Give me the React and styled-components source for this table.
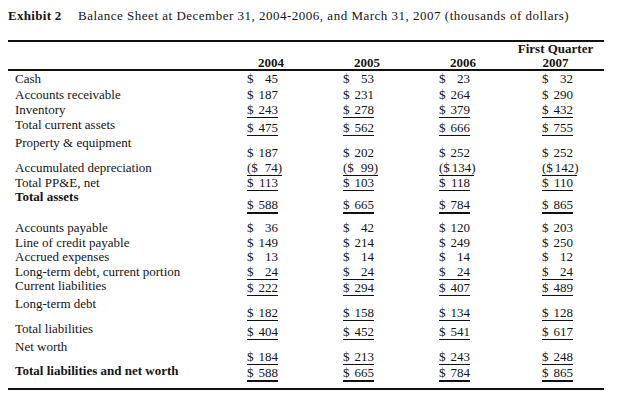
import styled, { createGlobalStyle } from 'styled-components';

const GlobalStyle = createGlobalStyle`
  html, body {
    margin: 0;
    padding: 0;
    background: #ffffff;
  }
  body {
    font-family: "Liberation Serif", "Times New Roman", serif;
    color: #141414;
  }
`

const Page = styled.div`
  width: 596px;
  padding: 8px 0 0 8px;
`

const Title = styled.div`
  display: flex;
  font-size: 13px;
  line-height: 15px;
  letter-spacing: 0.5px;
`

const ExhibitNo = styled.span`
  width: 70px;
  font-weight: 700;
  letter-spacing: 0.3px;
`

const Table = styled.div`
  margin-top: 17px;
  border-top: 2px solid #111;
  border-bottom: 2px solid #111;
  padding-bottom: 8px;
  font-size: 13px;
`

const Header = styled.div`
  display: grid;
  grid-template-columns: 211px 96px 96px 96px 97px;
  align-items: end;
  line-height: 13.5px;
  border-bottom: 2px solid #111;
  font-weight: 700;
`

const HeadCell = styled.div`
  text-align: center;
  padding-left: ${p => (p.$last ? 0 : 8)}px;
`

const Row = styled.div`
  display: grid;
  grid-template-columns: 211px 96px 96px 96px 97px;
  align-items: start;
  height: ${p => p.$h}px;
`

const Label = styled.div`
  padding-left: 7px;
  line-height: 15px;
  font-weight: ${p => (p.$bold ? 700 : 400)};
  white-space: nowrap;
`

const ValueCell = styled.div`
  padding-left: ${p => (p.$last ? 35 : 28)}px;
  margin-top: ${p => p.$shift}px;
`

const Amount = styled.div`
  display: inline-flex;
  width: ${p => (p.$neg ? 35 : 31)}px;
  line-height: 14px;
  border-bottom: ${p => p.$line || 0}px solid ${p => (p.$line ? '#111' : 'transparent')};
  height: 14px;
  white-space: nowrap;
`

const Spacer = styled.span`
  flex: 1;
  min-width: 2px;
`

const rows = [
  { label: 'Cash', v: ['45', '53', '23', '32'], h: 16 },
  { label: 'Accounts receivable', v: ['187', '231', '264', '290'], h: 15 },
  { label: 'Inventory', v: ['243', '278', '379', '432'], h: 15, line: 1 },
  { label: 'Total current assets', v: ['475', '562', '666', '755'], h: 18, shift: 3, line: 1 },
  { label: 'Property & equipment', v: ['187', '202', '252', '252'], h: 25, shift: 10 },
  { label: 'Accumulated depreciation', v: ['74', '99', '134', '142'], h: 15, line: 1, neg: true },
  { label: 'Total PP&E, net', v: ['113', '103', '118', '110'], h: 14, line: 1 },
  { label: 'Total assets', v: ['588', '665', '784', '865'], h: 31, shift: 8, line: 2, bold: true },
  { label: 'Accounts payable', v: ['36', '42', '120', '203'], h: 15 },
  { label: 'Line of credit payable', v: ['149', '214', '249', '250'], h: 14 },
  { label: 'Accrued expenses', v: ['13', '14', '14', '12'], h: 15 },
  { label: 'Long-term debt, current portion', v: ['24', '24', '24', '24'], h: 14, line: 1 },
  { label: 'Current liabilities', v: ['222', '294', '407', '489'], h: 18, shift: 2, line: 1 },
  { label: 'Long-term debt', v: ['182', '158', '134', '128'], h: 25, shift: 9, line: 1 },
  { label: 'Total liabilities', v: ['404', '452', '541', '617'], h: 18, shift: 3, line: 1 },
  { label: 'Net worth', v: ['184', '213', '243', '248'], h: 24, shift: 10, line: 1 },
  { label: 'Total liabilities and net worth', v: ['588', '665', '784', '865'], h: 17, shift: 2, line: 2, bold: true },
];

const Money = ({ value, neg, line }) => (
  <Amount $neg={neg} $line={line}>
    {neg && '('}
    <span>$</span>
    <Spacer />
    <span>{value}</span>
    {neg && ')'}
  </Amount>
);

export default function App() {
  return (
    <Page>
      <GlobalStyle />
      <Title>
        <ExhibitNo>Exhibit 2</ExhibitNo>
        <span>Balance Sheet at December 31, 2004-2006, and March 31, 2007 (thousands of dollars)</span>
      </Title>
      <Table>
        <Header>
          <div />
          <HeadCell>2004</HeadCell>
          <HeadCell>2005</HeadCell>
          <HeadCell>2006</HeadCell>
          <HeadCell $last>First Quarter<br />2007</HeadCell>
        </Header>
        {rows.map(r => (
          <Row key={r.label} $h={r.h}>
            <Label $bold={r.bold}>{r.label}</Label>
            {r.v.map((val, i) => (
              <ValueCell key={i} $last={i === 3} $shift={r.shift || 0}>
                <Money value={val} neg={r.neg} line={r.line} />
              </ValueCell>
            ))}
          </Row>
        ))}
      </Table>
    </Page>
  );
}
